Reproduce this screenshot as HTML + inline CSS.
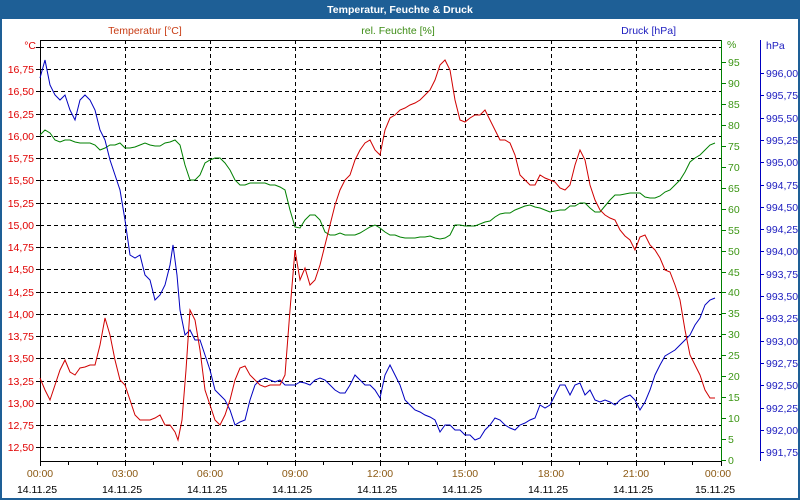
<!DOCTYPE html>
<html><head><meta charset="utf-8"><style>
html,body{margin:0;padding:0;background:#fff}
svg{display:block}
text{font-family:"Liberation Sans",sans-serif;font-size:10.5px}
</style></head><body>
<svg width="800" height="500" viewBox="0 0 800 500" xmlns="http://www.w3.org/2000/svg">
<rect x="0" y="0" width="800" height="500" fill="#fff"/>
<rect x="1" y="1" width="798" height="498" fill="none" stroke="#1e5f96" stroke-width="2"/>
<rect x="0" y="0" width="800" height="19" fill="#1e5f96"/>
<text x="400" y="13" text-anchor="middle" fill="#fff" font-weight="bold" style="font-size:10.5px">Temperatur, Feuchte &amp; Druck</text>

<text x="145" y="34" text-anchor="middle" fill="#c83c14">Temperatur [°C]</text>
<text x="398" y="34" text-anchor="middle" fill="#3c8c14">rel. Feuchte [%]</text>
<text x="676" y="34" text-anchor="end" fill="#2020c0">Druck [hPa]</text>

<g stroke="#000" stroke-dasharray="4,3" stroke-width="1">
<path d="M40 47.5H722M40 69.5H722M40 91.5H722M40 114.5H722M40 136.5H722M40 158.5H722M40 180.5H722M40 203.5H722M40 225.5H722M40 247.5H722M40 269.5H722M40 292.5H722M40 314.5H722M40 336.5H722M40 358.5H722M40 381.5H722M40 403.5H722M40 425.5H722M40 447.5H722"/>
<path d="M125.5 40V461M210.5 40V461M295.5 40V461M380.5 40V461M465.5 40V461M551.5 40V461M636.5 40V461"/>
</g>
<path d="M40.5 40V461.5H722M40 40.5H722" stroke="#000" fill="none"/>
<path d="M721.5 40V461" stroke="#008000"/>
<path d="M760.5 40V461" stroke="#0000c0"/>
<g stroke="#000">
<path d="M40.5 461V466M68.5 461V465M97.5 461V465M125.5 461V466M153.5 461V465M182.5 461V465M210.5 461V466M238.5 461V465M267.5 461V465M295.5 461V466M323.5 461V465M352.5 461V465M380.5 461V466M408.5 461V465M437.5 461V465M465.5 461V466M494.5 461V465M522.5 461V465M551.5 461V466M579.5 461V465M607.5 461V465M636.5 461V466M664.5 461V465M692.5 461V465M721.5 461V466"/>
<path d="M36 47.5H40M36 69.5H40M36 91.5H40M36 114.5H40M36 136.5H40M36 158.5H40M36 180.5H40M36 203.5H40M36 225.5H40M36 247.5H40M36 269.5H40M36 292.5H40M36 314.5H40M36 336.5H40M36 358.5H40M36 381.5H40M36 403.5H40M36 425.5H40M36 447.5H40"/>
</g>
<path stroke="#008000" d="M722 62.5H726M722 83.5H726M722 104.5H726M722 125.5H726M722 146.5H726M722 167.5H726M722 188.5H726M722 209.5H726M722 230.5H726M722 251.5H726M722 272.5H726M722 292.5H726M722 313.5H726M722 334.5H726M722 355.5H726M722 376.5H726M722 397.5H726M722 418.5H726M722 439.5H726M722 460.5H726"/>
<path stroke="#0000c0" d="M760 73.5H764M760 95.5H764M760 118.5H764M760 140.5H764M760 162.5H764M760 185.5H764M760 207.5H764M760 229.5H764M760 251.5H764M760 274.5H764M760 296.5H764M760 318.5H764M760 341.5H764M760 363.5H764M760 385.5H764M760 408.5H764M760 430.5H764M760 452.5H764"/>

<g fill="#e00000" text-anchor="end">
<text x="36" y="49">°C</text>
<text x="34" y="73">16,75</text><text x="34" y="95">16,50</text><text x="34" y="118">16,25</text><text x="34" y="140">16,00</text><text x="34" y="162">15,75</text><text x="34" y="184">15,50</text><text x="34" y="207">15,25</text><text x="34" y="229">15,00</text><text x="34" y="251">14,75</text><text x="34" y="273">14,50</text><text x="34" y="296">14,25</text><text x="34" y="318">14,00</text><text x="34" y="340">13,75</text><text x="34" y="362">13,50</text><text x="34" y="385">13,25</text><text x="34" y="407">13,00</text><text x="34" y="429">12,75</text><text x="34" y="451">12,50</text>
</g>
<g fill="#3c9614">
<text x="727" y="48">%</text>
<text x="728" y="66">95</text><text x="728" y="87">90</text><text x="728" y="108">85</text><text x="728" y="129">80</text><text x="728" y="150">75</text><text x="728" y="171">70</text><text x="728" y="192">65</text><text x="728" y="213">60</text><text x="728" y="234">55</text><text x="728" y="255">50</text><text x="728" y="276">45</text><text x="728" y="296">40</text><text x="728" y="317">35</text><text x="728" y="338">30</text><text x="728" y="359">25</text><text x="728" y="380">20</text><text x="728" y="401">15</text><text x="728" y="422">10</text><text x="728" y="443">5</text><text x="728" y="464">0</text>
</g>
<g fill="#2020c0">
<text x="766" y="49">hPa</text>
<text x="766" y="77">996,00</text><text x="766" y="99">995,75</text><text x="766" y="122">995,50</text><text x="766" y="144">995,25</text><text x="766" y="166">995,00</text><text x="766" y="189">994,75</text><text x="766" y="211">994,50</text><text x="766" y="233">994,25</text><text x="766" y="255">994,00</text><text x="766" y="278">993,75</text><text x="766" y="300">993,50</text><text x="766" y="322">993,25</text><text x="766" y="345">993,00</text><text x="766" y="367">992,75</text><text x="766" y="389">992,50</text><text x="766" y="412">992,25</text><text x="766" y="434">992,00</text><text x="766" y="456">991,75</text>
</g>
<g text-anchor="middle">
<g fill="#8c5a14">
<text x="40" y="477">00:00</text><text x="125" y="477">03:00</text><text x="210" y="477">06:00</text><text x="295" y="477">09:00</text><text x="380" y="477">12:00</text><text x="465" y="477">15:00</text><text x="551" y="477">18:00</text><text x="636" y="477">21:00</text><text x="718" y="477">00:00</text>
</g>
<g fill="#000">
<text x="37" y="493">14.11.25</text><text x="122" y="493">14.11.25</text><text x="207" y="493">14.11.25</text><text x="292" y="493">14.11.25</text><text x="377" y="493">14.11.25</text><text x="462" y="493">14.11.25</text><text x="548" y="493">14.11.25</text><text x="633" y="493">14.11.25</text><text x="715" y="493">15.11.25</text>
</g>
</g>

<polyline fill="none" stroke="#008000" stroke-width="1" points="40,135 45,130 50,133 55,140 60,142 65,140 70,140 75,142 80,143 85,143 90,143 95,145 100,150 105,148 110,145 115,145 120,143 125,148 130,148 135,147 140,145 145,143 150,145 155,146 160,146 165,143 170,142 175,140 180,145 185,165 190,180 195,180 200,175 205,163 210,160 215,158 220,158 225,163 230,170 235,180 240,185 245,185 250,183 255,183 260,183 265,183 270,185 275,185 280,187 285,190 290,210 295,227 300,228 305,220 310,215 315,215 320,220 325,232 330,235 335,235 340,233 345,235 350,235 355,235 360,233 365,230 370,227 375,225 380,228 385,232 390,235 395,235 400,237 405,238 410,238 415,238 420,237 425,237 430,236 435,238 440,239 445,238 450,235 455,225 460,225 465,226 470,226 475,226 480,224 485,222 490,221 495,217 500,214 505,213 510,213 515,210 520,208 525,206 530,205 535,207 540,208 545,210 550,212 555,211 560,210 565,210 570,206 575,206 580,203 585,203 590,208 595,212 600,212 605,206 610,200 615,195 620,195 625,194 630,193 635,193 640,193 645,197 650,198 655,198 660,196 665,192 670,190 675,185 680,180 685,172 690,162 695,158 700,155 705,150 710,145 715,143"/>
<polyline fill="none" stroke="#0000c0" stroke-width="1" points="40,78 45,60 50,85 55,95 60,100 65,95 70,110 75,120 80,100 85,95 90,100 95,110 100,130 105,140 110,160 115,175 120,190 125,220 130,255 135,258 140,255 145,275 150,280 155,300 160,295 165,285 170,265 173,245 177,275 180,310 185,335 190,330 195,340 200,340 205,355 210,370 215,390 220,395 225,400 230,410 235,425 240,422 245,420 250,400 255,385 260,380 265,378 270,380 275,382 280,380 285,385 290,385 295,385 300,382 305,383 310,385 315,380 320,378 325,380 330,385 335,390 340,393 345,393 350,385 355,375 360,380 365,385 370,385 375,390 380,398 385,375 390,365 395,375 400,385 405,400 410,405 415,410 420,412 425,415 430,417 435,420 440,432 445,425 450,425 455,430 460,430 465,435 470,435 475,440 480,438 485,430 490,425 495,418 500,420 505,425 510,428 515,430 520,425 525,423 530,420 535,418 540,405 545,408 550,405 555,395 560,385 565,385 570,395 575,385 580,383 585,395 590,390 595,400 600,402 605,400 610,402 615,405 620,400 625,397 630,395 635,400 640,410 645,402 650,390 655,375 660,365 665,356 670,353 675,350 680,345 685,340 690,335 695,325 700,318 705,305 710,300 715,298"/>
<polyline fill="none" stroke="#d00000" stroke-width="1" points="40,378 45,390 50,400 55,385 60,370 65,360 70,372 75,375 80,368 85,367 90,365 95,365 100,345 105,318 110,335 115,360 120,380 125,385 130,400 135,415 140,420 145,420 150,420 155,418 160,415 165,425 170,425 175,432 178,440 182,420 186,370 190,310 195,320 200,350 205,390 210,405 215,420 220,425 225,415 230,400 235,380 240,368 245,366 250,375 255,380 260,385 265,387 270,385 275,385 280,385 285,375 290,310 295,250 300,280 305,268 310,285 315,280 320,265 325,245 330,225 335,205 340,190 345,180 350,175 355,160 360,150 365,143 370,140 375,150 380,155 385,130 390,118 395,115 400,110 405,108 410,105 415,103 420,100 425,95 430,90 435,80 440,65 445,60 450,70 455,100 460,120 465,122 470,118 475,115 480,115 485,110 490,120 495,130 500,140 505,140 510,143 515,155 520,175 525,180 530,185 535,185 540,175 545,178 550,180 555,182 560,188 565,190 570,185 575,165 580,150 585,160 590,185 595,200 600,210 605,215 610,218 615,220 620,230 625,236 630,240 635,250 640,237 645,235 650,245 655,250 660,258 665,270 670,272 675,285 680,300 685,330 690,355 695,365 700,375 705,390 710,398 715,398"/>
</svg>
</body></html>
